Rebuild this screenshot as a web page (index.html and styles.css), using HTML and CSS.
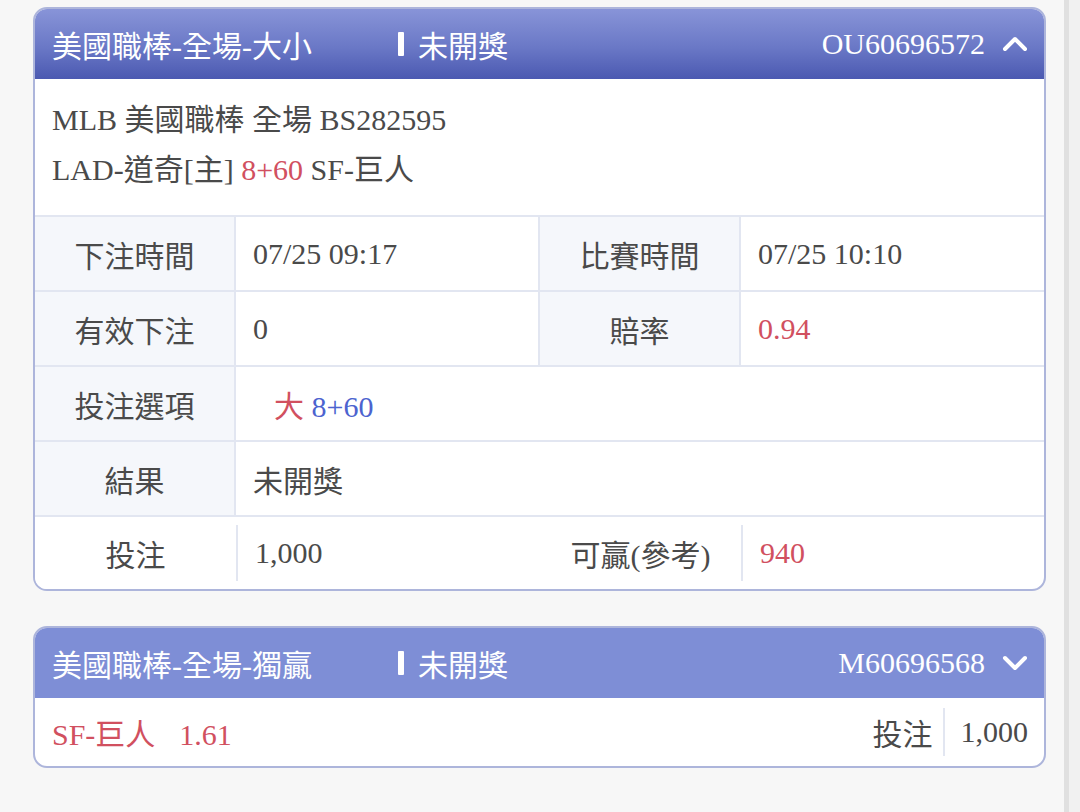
FILE: index.html
```html
<!DOCTYPE html>
<html lang="zh-Hant">
<head>
	<meta charset="UTF-8">
	<title>注單紀錄</title>
	<link rel="stylesheet" href="styles.css">
</head>
<body>
	<div class="page">
		<div class="list">

			<!-- 展開的注單 -->
			<div class="bet">
				<div class="bet-head open">
					<span class="bet-title">美國職棒-全場-大小</span>
					<span class="bet-status">未開獎</span>
					<span class="bet-no">OU60696572</span>
					<svg class="arrow" width="26" height="16" viewBox="0 0 26 16"><path d="M3 13 L13 3 L23 13" fill="none" stroke="#fff" stroke-width="4" stroke-linecap="round" stroke-linejoin="round"/></svg>
				</div>
				<div class="bet-info">
					<p>MLB 美國職棒 全場 BS282595</p>
					<p>LAD-道奇[主] <span class="red">8+60</span> SF-巨人</p>
				</div>
				<div class="row">
					<div class="lab">下注時間</div>
					<div class="val">07/25 09:17</div>
					<div class="lab">比賽時間</div>
					<div class="val">07/25 10:10</div>
				</div>
				<div class="row">
					<div class="lab">有效下注</div>
					<div class="val">0</div>
					<div class="lab">賠率</div>
					<div class="val red">0.94</div>
				</div>
				<div class="row">
					<div class="lab">投注選項</div>
					<div class="val wide pick"><span><span class="red">大</span> <span class="blue">8+60</span></span></div>
				</div>
				<div class="row">
					<div class="lab">結果</div>
					<div class="val wide">未開獎</div>
				</div>
				<div class="row last">
					<div class="lab">投注</div>
					<div class="val">1,000</div>
					<div class="lab">可贏(參考)</div>
					<div class="val red">940</div>
				</div>
			</div>

			<!-- 收起的注單 -->
			<div class="bet">
				<div class="bet-head">
					<span class="bet-title">美國職棒-全場-獨贏</span>
					<span class="bet-status">未開獎</span>
					<span class="bet-no">M60696568</span>
					<svg class="arrow" width="26" height="16" viewBox="0 0 26 16"><path d="M3 3 L13 13 L23 3" fill="none" stroke="#fff" stroke-width="4" stroke-linecap="round" stroke-linejoin="round"/></svg>
				</div>
				<div class="bet-sum">
					<span class="red">SF-巨人<span class="odds">1.61</span></span>
					<span class="sum-right">
						<span class="sum-lab">投注</span>
						<span class="sum-val">1,000</span>
					</span>
				</div>
			</div>

		</div>
		<div class="scroll"></div>
	</div>
</body>
</html>
```

FILE: styles.css
```css
* {
	padding: 0;
	margin: 0;
	box-sizing: border-box;
}
body {
	background: #f7f7f7;
	font-family: "Liberation Serif", "Noto Sans CJK TC", serif;
	font-size: 30px;
	color: #4a4a4a;
}
.page {
	display: flex;
	min-height: 812px;
}
.list {
	flex: 1;
	padding: 7px 18px 0 33px;
}
.scroll {
	width: 16px;
	background: #f1f1f1;
	border-left: 5px solid #e0e0e0;
}
.red {
	color: #d1505f;
}
.blue {
	color: #4c63cf;
}
/* 卡片 */
.bet {
	background: #fff;
	border: 2px solid #adb5db;
	border-radius: 14px;
	overflow: hidden;
	margin-bottom: 35px;
}
.bet-head {
	height: 70px;
	display: flex;
	align-items: center;
	padding: 0 16px 0 17px;
	color: #fff;
	background: #7e8ed6;
}
.bet-head.open {
	background: linear-gradient(#8894d8, #6a78c6 55%, #4b59b1);
}
.bet-title {
	width: 346px;
}
.bet-status {
	display: flex;
	align-items: center;
}
.bet-status::before {
	content: "";
	width: 6px;
	height: 24px;
	background: #fff;
	border-radius: 1px;
	margin-right: 14px;
}
.bet-no {
	margin-left: auto;
	margin-right: 17px;
}
.arrow {
	display: block;
}
.bet-info {
	padding: 16px 17px 20px;
	line-height: 50px;
}
/* 表格 */
.row {
	display: grid;
	grid-template-columns: 201px 304px 201px 1fr;
	height: 75px;
	border-top: 2px solid #e2e6f1;
}
.row.last {
	height: 74px;
}
.lab,
.val {
	display: flex;
	align-items: center;
}
.lab {
	justify-content: center;
	background: #f5f7fb;
	border-right: 2px solid #e2e6f1;
}
.val {
	padding-left: 17px;
}
.val:nth-child(2) {
	border-right: 2px solid #e2e6f1;
}
.val.wide {
	grid-column: 2 / 5;
	border-right: 0;
}
.val.pick {
	padding-left: 38px;
}
.row.last .lab {
	background: #fff;
	border-right: 0;
}
.row.last .val {
	border-right: 0;
	border-left: 2px solid #e2e6f1;
	margin: 8px 0;
}
/* 收起時的摘要 */
.bet-sum {
	height: 68px;
	display: flex;
	align-items: center;
	justify-content: space-between;
	padding: 0 16px 0 17px;
}
.odds {
	margin-left: 24px;
}
.sum-right {
	display: flex;
	align-items: center;
	height: 100%;
}
.sum-lab {
	padding-right: 10px;
}
.sum-val {
	border-left: 2px solid #e2e6f1;
	padding-left: 16px;
	height: 48px;
	display: flex;
	align-items: center;
}
```
